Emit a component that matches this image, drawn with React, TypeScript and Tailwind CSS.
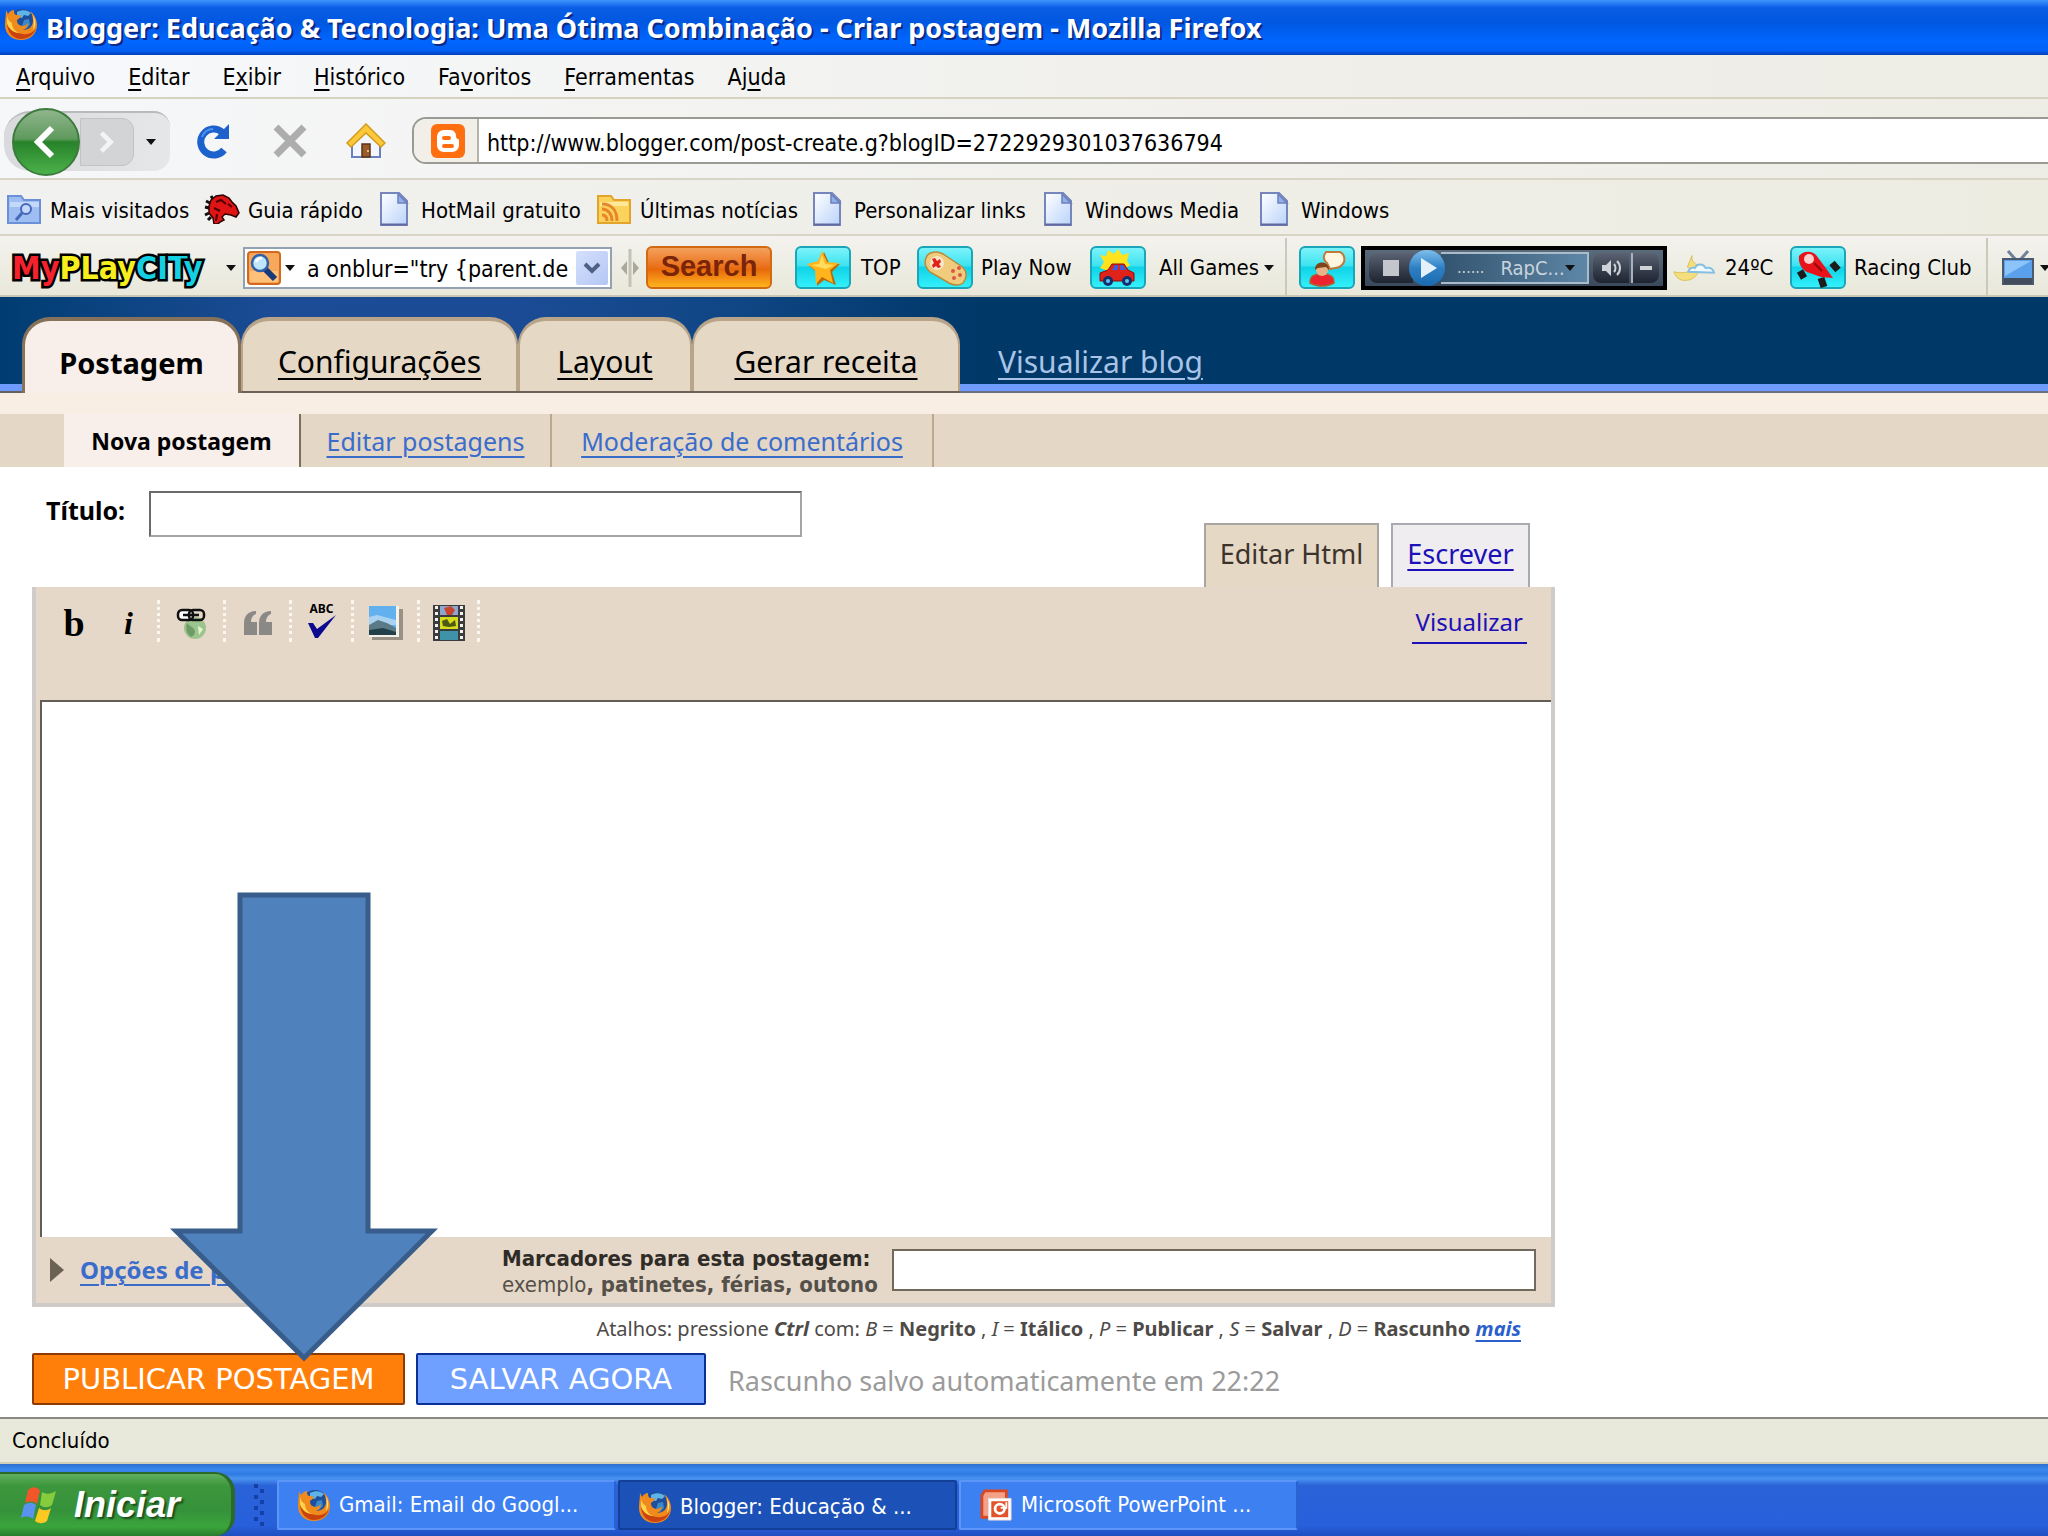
import type { ReactNode } from "react";

const menus = [
  { before: "", key: "A", after: "rquivo" },
  { before: "", key: "E", after: "ditar" },
  { before: "E", key: "x", after: "ibir" },
  { before: "", key: "H", after: "istórico" },
  { before: "Fa", key: "v", after: "oritos" },
  { before: "", key: "F", after: "erramentas" },
  { before: "Aj", key: "u", after: "da" },
];

function FirefoxIcon() {
  return (
    <svg viewBox="0 0 34 34" className="h-[34px] w-[34px] shrink-0" aria-hidden="true">
      <circle cx="18" cy="15" r="13" fill="#1d4f9c" />
      <path d="M13 5c5-3 11-2 14 1l-3 3-4-1-2 3-5-1z" fill="#5fb3e6" />
      <path d="M20 13l5-1 1 6-4 4-4-3z" fill="#3a8ac9" />
      <path d="M2 3l2 4c2-3 4-4 6-4 0 2 0 4 2 5 2 0 4 0 5 1-1 2-3 3-4 4 0 3 1 5 5 6 3 0 5-2 6-3 0 3-2 6-5 7 6 0 10-4 10-9 0-4-1-7-3-10 4 3 7 8 7 14 0 9-7 15-16 15S1 27 1 18C1 12 2 8 2 3z" fill="#f08a1c" />
      <path d="M3 16c0 9 6 16 14 16 7 0 13-4 15-11-3 5-8 7-13 6C11 26 5 22 3 16z" fill="#c9420f" />
      <path d="M3 9c1 4 3 6 5 7 0 5 3 9 8 10-7 0-12-5-13-10z" fill="#ffd24a" />
      <path d="M29 8c3 5 3 11 0 15 1-5 1-10 0-15z" fill="#ffe27a" />
    </svg>
  );
}

function BloggerIcon() {
  return (
    <svg viewBox="0 0 36 36" className="h-9 w-9" aria-hidden="true">
      <rect x="1" y="1" width="34" height="34" rx="6" fill="#ff6f0f" />
      <path
        fillRule="evenodd"
        fill="#fff"
        d="M14 7h6c4 0 6 3 6 6 0 2 1 3 2 3s1 1 1 2v4c0 4-3 7-7 7h-8c-4 0-7-3-7-7v-8c0-4 3-7 7-7zm0 6a2 2 0 0 0 0 4h5a2 2 0 0 0 0-4zm0 8a2 2 0 0 0 0 4h8a2 2 0 0 0 0-4z"
      />
    </svg>
  );
}

function PageIcon() {
  return (
    <svg viewBox="0 0 30 34" className="h-[34px] w-[30px] shrink-0" aria-hidden="true">
      <defs>
        <linearGradient id="page" x1="0" y1="0" x2="1" y2="1">
          <stop offset="0" stopColor="#fff" />
          <stop offset="1" stopColor="#b9d3fa" />
        </linearGradient>
      </defs>
      <path d="M2 1h18l8 8v24H2z" fill="url(#page)" stroke="#7785bd" strokeWidth="2" />
      <path d="M19 2v9h9z" fill="#8fb0ea" stroke="#6d7fba" strokeWidth="1.5" />
      <path d="M2 32.5h26" stroke="#6268a0" strokeWidth="2" />
    </svg>
  );
}

function SearchFolderIcon() {
  return (
    <svg viewBox="0 0 34 30" className="h-[30px] w-[34px] shrink-0" aria-hidden="true">
      <path d="M1 2h13l3 4h16v23H1z" fill="#9dbdf3" stroke="#6c90d8" strokeWidth="2" />
      <path d="M3 8h29v5H3z" fill="#c4d8fa" />
      <circle cx="19" cy="15" r="5" fill="#c3d8fb" stroke="#4668b8" strokeWidth="2" />
      <path d="M15 19l-6 7" stroke="#4668b8" strokeWidth="3" />
    </svg>
  );
}

function FeedFolderIcon() {
  return (
    <svg viewBox="0 0 34 30" className="h-[30px] w-[34px] shrink-0" aria-hidden="true">
      <path d="M1 2h13l3 4h16v23H1z" fill="#fbd35c" stroke="#e3a42c" strokeWidth="2" />
      <path d="M3 8h28v4H3z" fill="#ffe999" />
      <g fill="none" stroke="#e8862a" strokeWidth="3">
        <path d="M5 21c3 0 5 2 5 6" />
        <path d="M5 15c6 0 10 5 10 12" />
        <path d="M5 10c10 0 15 7 15 17" />
      </g>
    </svg>
  );
}

function DragonIcon() {
  return (
    <svg viewBox="0 0 36 30" className="h-[30px] w-9 shrink-0" aria-hidden="true">
      <path d="M9 5L7 2M6 9L2 7M5 14l-4-1M5 19l-4 2M7 23l-3 3" stroke="#111" strokeWidth="3" />
      <path d="M7 6l5-4 7-1 6 3 3 4 4 4 3 7-3 4-5-2-6-1-3 3 2 3-4 2-2 2h-4l-1-6-4-5V12z" fill="#e01414" stroke="#2b0000" strokeWidth="1.5" />
      <path d="M12 8l5-2 5 4M10 14l6 3M24 10l4 3M13 20l-1 7" stroke="#4d0000" strokeWidth="2" fill="none" />
    </svg>
  );
}

function ReloadIcon() {
  return (
    <svg viewBox="0 0 36 36" className="h-9 w-9" aria-hidden="true">
      <path d="M30 27a13 13 0 1 1-2-18" fill="none" stroke="#1d62cc" strokeWidth="7" />
      <path d="M35 1v15H20z" fill="#1d62cc" />
      <path d="M8 14c2-5 6-8 11-8" stroke="#4d92ee" strokeWidth="2" fill="none" />
    </svg>
  );
}

function StopIcon() {
  return (
    <svg viewBox="0 0 36 36" className="h-9 w-9" aria-hidden="true">
      <path d="M4 4l28 28M32 4L4 32" stroke="#adadad" strokeWidth="7" />
    </svg>
  );
}

function HomeIcon() {
  return (
    <svg viewBox="0 0 40 36" className="h-9 w-10" aria-hidden="true">
      <path d="M6 17L20 5l14 12v17H6z" fill="#f3f6ff" stroke="#6a80c0" strokeWidth="2" />
      <path d="M16 21h8v13h-8z" fill="#9a5a2a" stroke="#5d3514" strokeWidth="1.500" />
      <path d="M20 1L1 20l4 4L20 10l15 14 4-4z" fill="#fbc93a" stroke="#d49a1c" strokeWidth="1.500" />
      <circle cx="22" cy="28" r="1" fill="#ffe08a" />
    </svg>
  );
}

function Caret() {
  return (
    <svg viewBox="0 0 10 6" className="h-[6px] w-[10px] shrink-0" aria-hidden="true">
      <path d="M0 0h10L5 6z" fill="#111" />
    </svg>
  );
}

function Tile({ children }: { children: ReactNode }) {
  return (
    <svg viewBox="0 0 56 43" className="h-[43px] w-14 shrink-0" aria-hidden="true">
      <defs>
        <linearGradient id="tile" x1="0" y1="0" x2="0" y2="1">
          <stop offset="0" stopColor="#7ff4fb" />
          <stop offset="0.45" stopColor="#3fe3f1" />
          <stop offset="0.5" stopColor="#10d3e8" />
          <stop offset="1" stopColor="#35f2fb" />
        </linearGradient>
      </defs>
      <rect x="1" y="1" width="54" height="41" rx="5" fill="url(#tile)" stroke="#1aa5b8" strokeWidth="2" />
      {children}
    </svg>
  );
}

function StarTile() {
  return (
    <Tile>
      <path d="M29 6l5 11 11 1-8 8 4 13-12-5-7 6 1-13-9-7 11-3z" fill="#b86a0c" />
      <path d="M27 5l5 11 12 1-9 7 3 13-11-6-6 7-1-14-8-6 11-3z" fill="#ffb41c" />
      <path d="M27 9l3 9 9 1-8 4-8-2-7-2 8-1z" fill="#ffdc5e" />
    </Tile>
  );
}

function GamepadTile() {
  return (
    <Tile>
      <path d="M9 12c2-7 12-7 17-4l18 12c7 5 6 12 2 17-4 3-10 2-14 0L13 26c-4-4-6-9-4-14z" fill="#f1cb7c" stroke="#b98a3c" strokeWidth="1.500" />
      <circle cx="20" cy="17" r="7" fill="#f8e6c8" />
      <path d="M15 13l3-1 2 3 3-2 1 3-2 2 2 3-3 1-2-2-3 2-1-3 2-2z" fill="#e0231a" />
      <g fill="#d8584a">
        <circle cx="36" cy="25" r="2" />
        <circle cx="42" cy="22" r="2" />
        <circle cx="37" cy="32" r="2" />
        <circle cx="43" cy="29" r="2" />
      </g>
    </Tile>
  );
}

function CarTile() {
  return (
    <Tile>
      <path d="M10 9l6 1 2-6 6 4 4-5 4 6 7-2-2 8 3 4-8 6H18l-8-3 4-6z" fill="#ffe31c" />
      <path d="M10 27l8-3 4-6h12l4 6 6 3v8H10z" fill="#e0231a" stroke="#8c0d0d" strokeWidth="1" />
      <path d="M22 24l3-5h3v5zM30 24v-5h3l3 5z" fill="#3e5ee0" />
      <circle cx="18" cy="35" r="5" fill="#12306b" />
      <circle cx="37" cy="35" r="5" fill="#12306b" />
      <circle cx="18" cy="35" r="2" fill="#5fc4f0" />
      <circle cx="37" cy="35" r="2" fill="#5fc4f0" />
    </Tile>
  );
}

function ChatTile() {
  return (
    <Tile>
      <path d="M27 6h14c4 2 5 6 4 10-2 4-5 6-9 6l-5 1-3-6c-4-3-4-7-1-11z" fill="#fff6e0" stroke="#c07a3a" strokeWidth="2" />
      <path d="M11 37c0-7 4-9 12-9s12 2 12 9c-7 4-17 4-24 0z" fill="#ee2330" stroke="#b0602c" strokeWidth="1.500" />
      <circle cx="23" cy="24" r="6" fill="#e8b487" />
      <path d="M16 24c-1-10 15-10 14 0l-3-3-8 1z" fill="#7d4518" />
    </Tile>
  );
}

function RacingTile() {
  return (
    <Tile>
      <path d="M10 25l4 7M42 17l6 7M31 32l3 9" stroke="#1c1c1c" strokeWidth="7" />
      <path d="M9 10c4-5 12-6 17-1l9 12 8 11-12-1-11-4c-8-2-12-10-11-17z" fill="#e8131a" />
      <circle cx="19" cy="13" r="5" fill="#ffd0cc" />
      <path d="M24 17l8 8" stroke="#8c0a0a" strokeWidth="2" />
    </Tile>
  );
}

const letters = [
  { ch: "M", color: "text-[#f5222d]" },
  { ch: "y", color: "text-[#f5222d]" },
  { ch: "P", color: "text-[#f7ee1e]" },
  { ch: "L", color: "text-[#f7ee1e]" },
  { ch: "a", color: "text-[#f7ee1e]" },
  { ch: "y", color: "text-[#f7ee1e]" },
  { ch: "C", color: "text-[#15cfe2]" },
  { ch: "I", color: "text-[#15cfe2]" },
  { ch: "T", color: "text-[#15cfe2]" },
  { ch: "y", color: "text-[#15cfe2]" },
];

function TitleBar() {
  return (
    <header className="flex h-[55px] items-center gap-2 bg-[linear-gradient(180deg,#3f96ff_0%,#0a5ee6_14%,#0057e0_40%,#0066ff_75%,#0060f5_92%,#003fb5_100%)] px-1">
      <span className="mb-2">
        <FirefoxIcon />
      </span>
      <h1 className="font-['Noto_Sans','Liberation_Sans',sans-serif] text-[27px] font-bold whitespace-nowrap text-white [text-shadow:2px_2px_0_#0a2a86]">
        Blogger: Educação &amp; Tecnologia: Uma Ótima Combinação - Criar postagem - Mozilla Firefox
      </h1>
    </header>
  );
}

function MenuBar() {
  return (
    <nav className="flex h-11 items-center gap-[33px] border-b-2 border-[#d6d2c0] bg-[linear-gradient(90deg,#f7f9fc,#f0efeb_60%,#eeede5)] px-4 pt-[2px] text-[23px]">
      {menus.map((m) => (
        <button key={m.key + m.after} className="whitespace-nowrap">
          {m.before}
          <span className="underline decoration-2 underline-offset-4">{m.key}</span>
          {m.after}
        </button>
      ))}
    </nav>
  );
}

function NavBar() {
  return (
    <div className="flex h-[81px] items-center border-b-2 border-[#d8d5c6] bg-[linear-gradient(90deg,#f6f7f9,#f1f0ec_60%,#eeede5)] pt-1 pl-1">
      <div className="flex h-[60px] w-[166px] shrink-0 items-center rounded-l-[26px] rounded-r-2xl border-t-2 border-[#b9babb] bg-linear-to-r from-[#d9dadd] to-[#e6e7e8] pl-2">
        <button aria-label="Voltar" className="z-10 flex h-[68px] w-[68px] shrink-0 items-center justify-center rounded-full border-2 border-[#3d7a3d] bg-[linear-gradient(180deg,#8fb58c_0%,#5f9a5d_45%,#27822a_50%,#4bb24a_100%)]">
          <svg viewBox="0 0 24 34" className="mr-1 h-[34px] w-6" aria-hidden="true">
            <path d="M20 3L6 17l14 14" fill="none" stroke="#fff" strokeWidth="6" />
          </svg>
        </button>
        <button aria-label="Avançar" className="flex h-12 w-[54px] items-center justify-center rounded-r-xl border border-[#c2c3c5] bg-[#d3d4d6]">
          <svg viewBox="0 0 20 26" className="h-6 w-5" aria-hidden="true">
            <path d="M4 3l10 10L4 23" fill="none" stroke="#f4f4f4" strokeWidth="5" />
          </svg>
        </button>
        <button aria-label="Histórico de navegação" className="ml-2 p-1">
          <Caret />
        </button>
      </div>
      <button aria-label="Recarregar" className="ml-6"><ReloadIcon /></button>
      <button aria-label="Parar" className="ml-[42px]"><StopIcon /></button>
      <button aria-label="Página inicial" className="ml-[38px]"><HomeIcon /></button>
      <div className="ml-[26px] flex h-[47px] flex-1 rounded-l-[14px] border-2 border-r-0 border-[#9a9a94] bg-white">
        <div className="flex w-[65px] items-center justify-center rounded-l-xl border-r-2 border-[#b5b4ac] bg-[#f1efe8] pl-1">
          <BloggerIcon />
        </div>
        <input
          aria-label="Endereço"
          className="min-w-0 flex-1 bg-transparent pt-1 pl-2 text-[23px] outline-none"
          defaultValue="http://www.blogger.com/post-create.g?blogID=2722929301037636794"
        />
      </div>
    </div>
  );
}

function Bookmark({ icon, label, className }: { icon: ReactNode; label: string; className: string }) {
  return (
    <a href="#" className={`flex shrink-0 items-center whitespace-nowrap ${className}`}>
      {icon}
      <span className="pt-1">{label}</span>
    </a>
  );
}

function BookmarksBar() {
  return (
    <div className="flex h-14 items-center border-b-2 border-[#d8d5c6] bg-[linear-gradient(90deg,#f1f1f0,#edece1)] pt-1 pl-[7px]">
      <Bookmark className="w-[197px] gap-[9px]" icon={<SearchFolderIcon />} label="Mais visitados" />
      <Bookmark className="w-[175px] gap-2" icon={<DragonIcon />} label="Guia rápido" />
      <Bookmark className="w-[218px] gap-3" icon={<PageIcon />} label="HotMail gratuito" />
      <Bookmark className="w-[215px] gap-[9px]" icon={<FeedFolderIcon />} label="Últimas notícias" />
      <Bookmark className="w-[231px] gap-3" icon={<PageIcon />} label="Personalizar links" />
      <Bookmark className="w-[216px] gap-3" icon={<PageIcon />} label="Windows Media" />
      <Bookmark className="gap-3" icon={<PageIcon />} label="Windows" />
    </div>
  );
}

function Player() {
  return (
    <div className="ml-[6px] flex h-11 w-[306px] shrink-0 items-center border-4 border-black bg-[linear-gradient(180deg,#5a6b7c,#39485a)] px-1">
      <button aria-label="Parar rádio" className="flex h-[30px] w-11 items-center justify-center rounded-l-lg bg-linear-to-b from-[#5b6373] to-[#1e2430]">
        <span className="h-4 w-4 bg-[#c3c7cd]" />
      </button>
      <button aria-label="Tocar" className="z-10 -ml-1 flex h-9 w-9 shrink-0 items-center justify-center rounded-full bg-[linear-gradient(180deg,#7fc0ee,#2d7fc4_50%,#1b6ab0)]">
        <svg viewBox="0 0 16 20" className="ml-1 h-5 w-4" aria-hidden="true">
          <path d="M0 0l16 10L0 20z" fill="#e4f1fb" />
        </svg>
      </button>
      <button className="-ml-1 flex h-8 flex-1 items-center border-2 border-l-0 border-[#a9bccb] bg-linear-to-r from-[#33546f] to-[#5e86a6] pl-4 text-[20px] text-[#c9d4dd]">
        <span className="mr-4 text-base">......</span>
        RapC...
        <Caret />
      </button>
      <button aria-label="Volume" className="ml-1 flex h-[30px] w-9 items-center justify-center rounded-l-lg bg-linear-to-b from-[#5b6373] to-[#1e2430]">
        <svg viewBox="0 0 20 18" className="h-[18px] w-5" aria-hidden="true">
          <path d="M1 6h4l5-5v16l-5-5H1z" fill="#cfd3d8" />
          <path d="M13 5c2 2 2 6 0 8M16 2c4 4 4 10 0 14" fill="none" stroke="#cfd3d8" strokeWidth="2" />
        </svg>
      </button>
      <button aria-label="Minimizar" className="ml-[2px] flex h-[30px] w-7 items-center justify-center rounded-r-lg border-l-2 border-[#aab1ba] bg-linear-to-b from-[#5b6373] to-[#1e2430]">
        <span className="h-1 w-3 bg-[#cfd3d8]" />
      </button>
    </div>
  );
}

function ToolButton({ icon, label, className, menu }: { icon: ReactNode; label: string; className: string; menu?: boolean }) {
  return (
    <button className={`flex shrink-0 items-center whitespace-nowrap ${className}`}>
      {icon}
      {label}
      {menu && <span className="-ml-2"><Caret /></span>}
    </button>
  );
}

function PlayCityBar() {
  return (
    <div className="flex h-[61px] items-center overflow-hidden border-b-2 border-[#c9c7b4] bg-[linear-gradient(180deg,#f3f2ee,#e9e8da)] pt-1 pl-3">
      <a href="#" className="w-[202px] shrink-0 font-['DejaVu_Sans_Condensed','DejaVu_Sans',sans-serif] text-[32px] leading-[40px] font-bold whitespace-nowrap [-webkit-text-stroke:5px_#000] [paint-order:stroke_fill]">
        {letters.map((l, i) => (
          <span key={i} className={l.color}>{l.ch}</span>
        ))}
      </a>
      <button aria-label="Menu MyPlayCity" className="ml-3"><Caret /></button>
      <div className="ml-[7px] flex h-[42px] w-[369px] shrink-0 items-center border-2 border-[#93a2b3] bg-white pl-[2px]">
        <button aria-label="Tipo de busca" className="flex shrink-0 items-center gap-1">
          <svg viewBox="0 0 34 34" className="h-[34px] w-[34px]" aria-hidden="true">
            <rect x="1" y="1" width="32" height="32" rx="3" fill="#f7a85a" stroke="#d2691e" strokeWidth="2" />
            <path d="M3 20h28v11H3z" fill="#ffc07a" />
            <path d="M18 18l10 10" stroke="#173a7a" strokeWidth="6" />
            <circle cx="13" cy="12" r="8" fill="#bfe6fa" stroke="#2f62a8" strokeWidth="2.500" />
            <path d="M9 11c1-3 3-4 6-4" stroke="#fff" strokeWidth="2.500" fill="none" />
          </svg>
          <Caret />
        </button>
        <input aria-label="Busca" className="ml-3 min-w-0 flex-1 pt-[2px] text-[23px] outline-none" defaultValue={'a onblur="try {parent.de'} />
        <button aria-label="Abrir lista" className="mr-[2px] flex h-[34px] w-8 shrink-0 items-center justify-center rounded-xs bg-linear-to-br from-[#d5e0fc] to-[#b3c6f4]">
          <svg viewBox="0 0 18 14" className="h-[14px] w-[18px]" aria-hidden="true">
            <path d="M2 3l7 7 7-7" fill="none" stroke="#4d6185" strokeWidth="4" />
          </svg>
        </button>
      </div>
      <svg viewBox="0 0 20 40" className="ml-2 h-10 w-5 shrink-0" aria-hidden="true">
        <path d="M10 1v38" stroke="#c4c2b4" strokeWidth="3" />
        <path d="M7 13v14l-6-7zM13 13v14l6-7z" fill="#aaa89c" />
      </svg>
      <button className="ml-[6px] h-[43px] w-[126px] shrink-0 rounded-md border-2 border-[#d26a12] bg-[linear-gradient(180deg,#f4a05c_0%,#ea7420_45%,#e8690c_55%,#ffb41e_100%)] pb-1 font-['Liberation_Sans',Arial,sans-serif] text-[29px] leading-[34px] font-bold text-[#7a2408]">
        Search
      </button>
      <ToolButton className="ml-[23px] w-[122px] gap-[10px]" icon={<StarTile />} label="TOP" />
      <ToolButton className="w-[173px] gap-2" icon={<GamepadTile />} label="Play Now" />
      <ToolButton className="w-[197px] gap-[13px] border-r-2 border-[#cbc9ba] py-2" icon={<CarTile />} label="All Games" menu />
      <button aria-label="Bate-papo" className="ml-3 shrink-0"><ChatTile /></button>
      <Player />
      <ToolButton
        className="ml-[6px] w-[117px] gap-[10px]"
        icon={
          <svg viewBox="0 0 44 30" className="h-[30px] w-[42px]" aria-hidden="true">
            <path d="M20 2c-1 5 2 9 7 10l-8 4-4-2c2-4 3-8 5-12zM1 19c8 2 15 1 20-3l5 4c-3 6-8 8-14 8-5 0-9-3-11-9z" fill="#f5df7c" stroke="#d9bd55" />
            <path d="M16 19c1-4 4-5 7-4 2-5 9-5 11 0 5-1 8 1 9 5z" fill="#eef8ff" stroke="#86bfe0" strokeWidth="2" />
          </svg>
        }
        label="24ºC"
      />
      <ToolButton className="w-[198px] gap-2 border-r-2 border-[#cbc9ba] py-2" icon={<RacingTile />} label="Racing Club" />
      <button aria-label="TV" className="ml-[14px] flex shrink-0 items-center gap-[6px]">
        <svg viewBox="0 0 32 36" className="h-9 w-8" aria-hidden="true">
          <path d="M6 1l8 9M26 1l-8 9" stroke="#70829a" strokeWidth="3" />
          <rect x="1" y="9" width="30" height="25" fill="#5aa0ea" stroke="#4c5a70" strokeWidth="2" />
          <path d="M3 11h26L3 26z" fill="#8cc4fa" />
          <path d="M2 28h28v6H2z" fill="#434c5c" />
        </svg>
        <Caret />
      </button>
    </div>
  );
}

function BloggerTabs() {
  const tab =
    "flex h-[74px] items-center justify-center rounded-t-[28px] border-x-2 border-t-4 border-[#b8a488] bg-[#e5d8c5] pt-3 underline decoration-2 underline-offset-[5px]";
  return (
    <div className="flex h-24 shrink-0 items-end bg-[linear-gradient(90deg,#003c70_0%,#0b4380_5%,#1c4c96_14%,#1a4b94_26%,#0f4684_36%,#003868_48%)] text-[30px] whitespace-nowrap">
      <div className="h-[9px] w-[22px] border-b-2 border-[#635f5c] bg-[#6f9bff]" />
      <span className="flex h-[76px] w-[219px] items-center justify-center rounded-t-[28px] border-x-3 border-t-4 border-[#86715a] bg-[#f8eeea] pt-3 text-[29px] font-bold">
        Postagem
      </span>
      <div className="flex border-b-2 border-[#6d6257]">
        <a href="#" className={`${tab} w-[277px]`}>Configurações</a>
        <a href="#" className={`${tab} w-[174px]`}>Layout</a>
        <a href="#" className={`${tab} w-[268px]`}>Gerar receita</a>
      </div>
      <div className="flex h-full flex-1 flex-col justify-end">
        <a href="#" className="mb-1 ml-[38px] self-start leading-9 text-[#a9c4e6] underline decoration-2 underline-offset-[5px]">
          Visualizar blog
        </a>
        <div className="h-[9px] border-b-2 border-[#6a7080] bg-[#6f9bff]" />
      </div>
    </div>
  );
}

function SubTabs() {
  const tab = "flex items-center justify-center border-r-2";
  return (
    <div className="shrink-0 bg-[#f9eee4] pt-[21px]">
      <div className="flex h-[53px] bg-[#e4d7c5] pl-16 text-[25px] whitespace-nowrap text-[#3a6ccc]">
        <span className={`${tab} w-[237px] border-[#7b6f60] bg-[#f8eeea] text-[23px] font-bold text-black`}>Nova postagem</span>
        <a href="#" className={`${tab} w-[251px] border-[#bba98f] underline decoration-2 underline-offset-[5px]`}>
          Editar postagens
        </a>
        <a href="#" className={`${tab} w-[382px] border-[#bba98f] underline decoration-2 underline-offset-[5px]`}>
          Moderação de comentários
        </a>
      </div>
    </div>
  );
}

function EditorTools() {
  const cell = "flex h-[42px] shrink-0 items-center justify-center border-r-3 border-dotted border-[#fbf7f0]";
  return (
    <div className="flex items-start pt-[13px] pl-3">
      <button aria-label="Negrito" className="h-[42px] w-[52px] pt-1 font-['Liberation_Serif',serif] text-[38px] leading-[38px] font-bold">b</button>
      <button aria-label="Itálico" className={`${cell} w-[60px] pt-1 font-['Liberation_Serif',serif] text-[32px] leading-[38px] font-bold italic`}>i</button>
      <button aria-label="Link" className={`${cell} w-[66px] pt-1`}>
        <svg viewBox="0 0 34 34" className="h-[34px] w-[34px]">
          <circle cx="20" cy="22" r="11" fill="#9cc48e" />
          <path d="M12 17c3 4 6 3 8 8 0 4-2 5-4 6-4-3-6-8-4-14z" fill="#6f9c66" />
          <path d="M23 20l5 3-4 6z" fill="#e0f6cf" />
          <rect x="3" y="4" width="15" height="10" rx="4" fill="#fff" stroke="#111" strokeWidth="2.500" />
          <rect x="14" y="4" width="15" height="10" rx="4" fill="none" stroke="#111" strokeWidth="2.500" />
          <path d="M8 9h16" stroke="#111" strokeWidth="2.500" />
        </svg>
      </button>
      <button aria-label="Citação" className={`${cell} w-[66px] pt-1`}>
        <svg viewBox="0 0 28 24" className="h-6 w-7">
          <path d="M12 0v3c-3 1-5 4-5 8h6v13H0V12C0 5 4 0 12 0zM27 0v3c-3 1-5 4-5 8h6v13H15V12c0-7 4-12 12-12z" fill="#8b8986" />
        </svg>
      </button>
      <button className={`${cell} w-[62px] flex-col`}>
        <span className="text-[12px] leading-3 font-bold">ABC</span>
        <svg viewBox="0 0 32 24" className="h-6 w-8" aria-hidden="true">
          <path d="M2 8h5l4 6L30 0 12 23H9z" fill="#0c0a8e" />
        </svg>
      </button>
      <button aria-label="Adicionar imagem" className={`${cell} w-[66px] pt-1`}>
        <svg viewBox="0 0 36 36" className="h-9 w-9">
          <path d="M4 4h31v31H4z" fill="#7b7368" opacity="0.7" />
          <path d="M1 1h30v31H1z" fill="#f4f1e8" />
          <path d="M1 1h27v29H1z" fill="#62b1ee" />
          <path d="M1 12l8-2 19 5v5H1z" fill="#a9d2f0" />
          <path d="M1 20l9-5 9 3 9 5v7H1z" fill="#5b7a88" />
          <path d="M1 25l14-2 13 4v3H1z" fill="#22404a" />
        </svg>
      </button>
      <button aria-label="Adicionar vídeo" className={`${cell} w-[60px] pt-1`}>
        <svg viewBox="0 0 32 36" className="h-9 w-8">
          <path d="M0 0h32v36H0z" fill="#3c3c3c" />
          <path d="M7 1h18v9H7z" fill="#8fa6cf" />
          <path d="M11 3l7-2 4 4-3 5h-5z" fill="#c8442c" />
          <path d="M7 12h18v12H7z" fill="#d4dc1c" />
          <path d="M9 16l5-2 3 5 5-4 1 6-7 1-6-1z" fill="#4e5a10" />
          <path d="M7 26h18v9H7z" fill="#3f93a8" />
          <path d="M3.500 1v34M28.500 1v34" stroke="#f2f2f2" strokeWidth="3" strokeDasharray="3 3" />
        </svg>
      </button>
      <a href="#" className="mt-2 mr-6 ml-auto border-b-2 border-[#1c10b8] px-1 pb-[6px] text-[24px] text-[#1c10b8]">Visualizar</a>
    </div>
  );
}

function Shortcut({ k, label }: { k: string; label: string }) {
  return (
    <>
      <i>{k}</i> = <b>{label}</b>
    </>
  );
}

function Editor() {
  return (
    <form className="flex w-full max-w-[1523px] flex-1 flex-col">
      <div className="flex items-start justify-between">
        <label className="mt-6 ml-[14px] flex items-center text-[25px] font-bold">
          <span className="w-[103px] pb-2">Título:</span>
          <input className="h-[46px] w-[653px] border-2 border-t-[#6a6a6a] border-r-[#a5a5a5] border-b-[#a5a5a5] border-l-[#6a6a6a] bg-white px-2 font-normal" />
        </label>
        <div className="mt-14 mr-[25px] flex h-16 gap-3 text-[27px]">
          <button type="button" className="w-[175px] border-2 border-b-0 border-[#a9a5a2] bg-[#e5d8c5] pb-1 text-[#3c342c]">Editar Html</button>
          <a href="#" className="flex w-[139px] items-center justify-center border-2 border-b-0 border-[#a9a9b0] bg-[#efedf0] pb-1 text-[#1c10b8] underline decoration-2 underline-offset-[5px]">
            Escrever
          </a>
        </div>
      </div>
      <div className="flex flex-1 flex-col border-x-4 border-b-4 border-[#cfcbc9] bg-[#e5d8c8]">
        <div className="h-[113px] shrink-0">
          <EditorTools />
        </div>
        <textarea aria-label="Texto da postagem" className="ml-1 block min-h-40 flex-1 resize-none border-t-2 border-l-2 border-[#625d55] bg-white p-2 outline-none" />
        <div className="flex h-[66px] shrink-0 items-center pr-[15px] pl-[14px]">
          <svg viewBox="0 0 14 24" className="h-6 w-[14px]" aria-hidden="true">
            <path d="M0 0l14 12L0 24z" fill="#6b6256" />
          </svg>
          <a href="#" className="ml-4 w-[422px] text-[24px] font-bold whitespace-nowrap text-[#3a6ccc] underline decoration-2 underline-offset-[5px]">
            Opções de postagem
          </a>
          <label htmlFor="labels" className="w-[390px] shrink-0 pt-1 font-['DejaVu_Sans_Condensed','DejaVu_Sans',sans-serif] text-[22px] leading-[26px] whitespace-nowrap text-[#55504a]">
            <b className="block text-[#2f2b27]">Marcadores para esta postagem:</b>
            exemplo<b>, patinetes, férias, outono</b>
          </label>
          <input id="labels" className="h-[42px] min-w-0 flex-1 border-2 border-[#716a5c] bg-white px-2" />
        </div>
      </div>
      <p className="mt-2 mr-[34px] self-end text-[20px] leading-7 whitespace-nowrap text-[#4d4a48]">
        Atalhos: pressione <b><i>Ctrl</i></b> com: <Shortcut k="B" label="Negrito" /> , <Shortcut k="I" label="Itálico" /> ,{" "}
        <Shortcut k="P" label="Publicar" /> , <Shortcut k="S" label="Salvar" /> , <Shortcut k="D" label="Rascunho" />{" "}
        <a href="#" className="font-bold text-[#2b5fcc] italic underline decoration-2 underline-offset-4">mais</a>
      </p>
      <div className="mt-[10px] mb-3 flex h-[52px] items-center text-[29px] text-white">
        <button type="button" className="h-full w-[373px] rounded-xs border-2 border-[#8f3a05] bg-[#ff7f0a] font-['DejaVu_Sans',sans-serif] whitespace-nowrap">
          PUBLICAR POSTAGEM
        </button>
        <button type="button" className="ml-[11px] h-full w-[290px] rounded-xs border-2 border-[#0a2f96] bg-[#6f9fff] font-['DejaVu_Sans',sans-serif] whitespace-nowrap">
          SALVAR AGORA
        </button>
        <span className="mt-1 ml-[22px] text-[27px] whitespace-nowrap text-[#9b9b9b]">Rascunho salvo automaticamente em 22:22</span>
      </div>
    </form>
  );
}

function Task({ icon, label, active }: { icon: ReactNode; label: string; active?: boolean }) {
  return (
    <button
      className={`flex h-[50px] w-[339px] items-center gap-2 rounded-xs border-2 pl-[18px] text-[22px] whitespace-nowrap text-white ${
        active ? "border-[#123f97] bg-[#1c52b8] pt-1" : "border-[#5c97f7] border-r-[#2a62d2] bg-[#3d80f2]"
      }`}
    >
      {icon}
      {label}
    </button>
  );
}

function Taskbar() {
  return (
    <footer className="flex h-[72px] shrink-0 items-end bg-[linear-gradient(180deg,#2f6fd0_0%,#3a88ee_8%,#2f7ae2_14%,#4a94f0_20%,#2a62d8_30%,#2860dc_85%,#1f4fc0_100%)]">
      <button className="flex h-16 w-[235px] items-center gap-3 rounded-r-[20px] border-t-2 border-r-4 border-[#2c6a2c] bg-[linear-gradient(180deg,#5fae5c_0%,#3c963c_20%,#35923a_60%,#3aa53c_85%,#2a7d2c_100%)] pl-5">
        <svg viewBox="0 0 42 40" className="h-10 w-[42px]" aria-hidden="true">
          <path d="M8 5c5-4 8-3 12 0l-3 14c-4-3-8-3-12-1z" fill="#f0562a" />
          <path d="M22 7c5 3 9 2 14-1l-4 14c-4 3-8 3-12 0z" fill="#86cc3c" />
          <path d="M4 20c5-3 8-3 12 0l-3 14c-4-3-8-3-12-1z" fill="#5a92f0" />
          <path d="M19 23c4 3 8 3 12 0l-4 13c-4 3-8 3-12 0z" fill="#fbc922" />
        </svg>
        <span className="font-['Liberation_Sans',Arial,sans-serif] text-[36px] leading-none font-bold text-white italic [text-shadow:2px_2px_2px_#1c4a1c]">Iniciar</span>
      </button>
      <svg viewBox="0 0 14 44" className="mr-[10px] mb-2 ml-[18px] h-11 w-[14px]" aria-hidden="true">
        <path d="M3 0v44" stroke="#1540a8" strokeWidth="4" strokeDasharray="4 7" />
        <path d="M9 5v39" stroke="#1540a8" strokeWidth="4" strokeDasharray="4 7" />
      </svg>
      <div className="mb-[6px] flex gap-[2px]">
        <Task icon={<FirefoxIcon />} label="Gmail: Email do Googl..." />
        <Task active icon={<FirefoxIcon />} label="Blogger: Educação & ..." />
        <Task
          icon={
            <svg viewBox="0 0 34 34" className="h-8 w-[34px]" aria-hidden="true">
              <path d="M5 2h23v28H2V7z" fill="#f3a287" stroke="#d9481f" strokeWidth="3" />
              <path d="M9 10h24v23H9z" fill="#fff" stroke="#e9dcd6" />
              <path d="M12 13h18v17H12z" fill="#e2532c" />
              <circle cx="21" cy="21" r="5" fill="none" stroke="#fff" strokeWidth="3" />
              <path d="M22 20h6v-6" fill="none" stroke="#fff" strokeWidth="2" />
            </svg>
          }
          label="Microsoft PowerPoint ..."
        />
      </div>
    </footer>
  );
}

export default function App() {
  return (
    <div className="flex min-h-screen flex-col overflow-hidden bg-white font-['DejaVu_Sans_Condensed','DejaVu_Sans',sans-serif] text-[22px] leading-7 text-black">
      <TitleBar />
      <MenuBar />
      <NavBar />
      <BookmarksBar />
      <PlayCityBar />
      <main className="flex flex-1 flex-col font-['Noto_Sans','Liberation_Sans',sans-serif]">
        <BloggerTabs />
        <SubTabs />
        <div className="relative flex flex-1 flex-col px-8">
          <Editor />
          <svg viewBox="0 0 268 472" className="pointer-events-none absolute bottom-[53px] left-[170px] h-[472px] w-[268px]" aria-hidden="true">
            <path d="M70 3h128v336h64L134 466 6 339h64z" fill="#4f81bd" stroke="#385d8a" strokeWidth="5" />
          </svg>
        </div>
      </main>
      <div role="status" className="flex h-[47px] shrink-0 items-center border-t-2 border-b-2 border-t-[#8a8a80] border-b-[#d2cfb8] bg-[#e9e9db] pl-3">
        Concluído
      </div>
      <Taskbar />
    </div>
  );
}
